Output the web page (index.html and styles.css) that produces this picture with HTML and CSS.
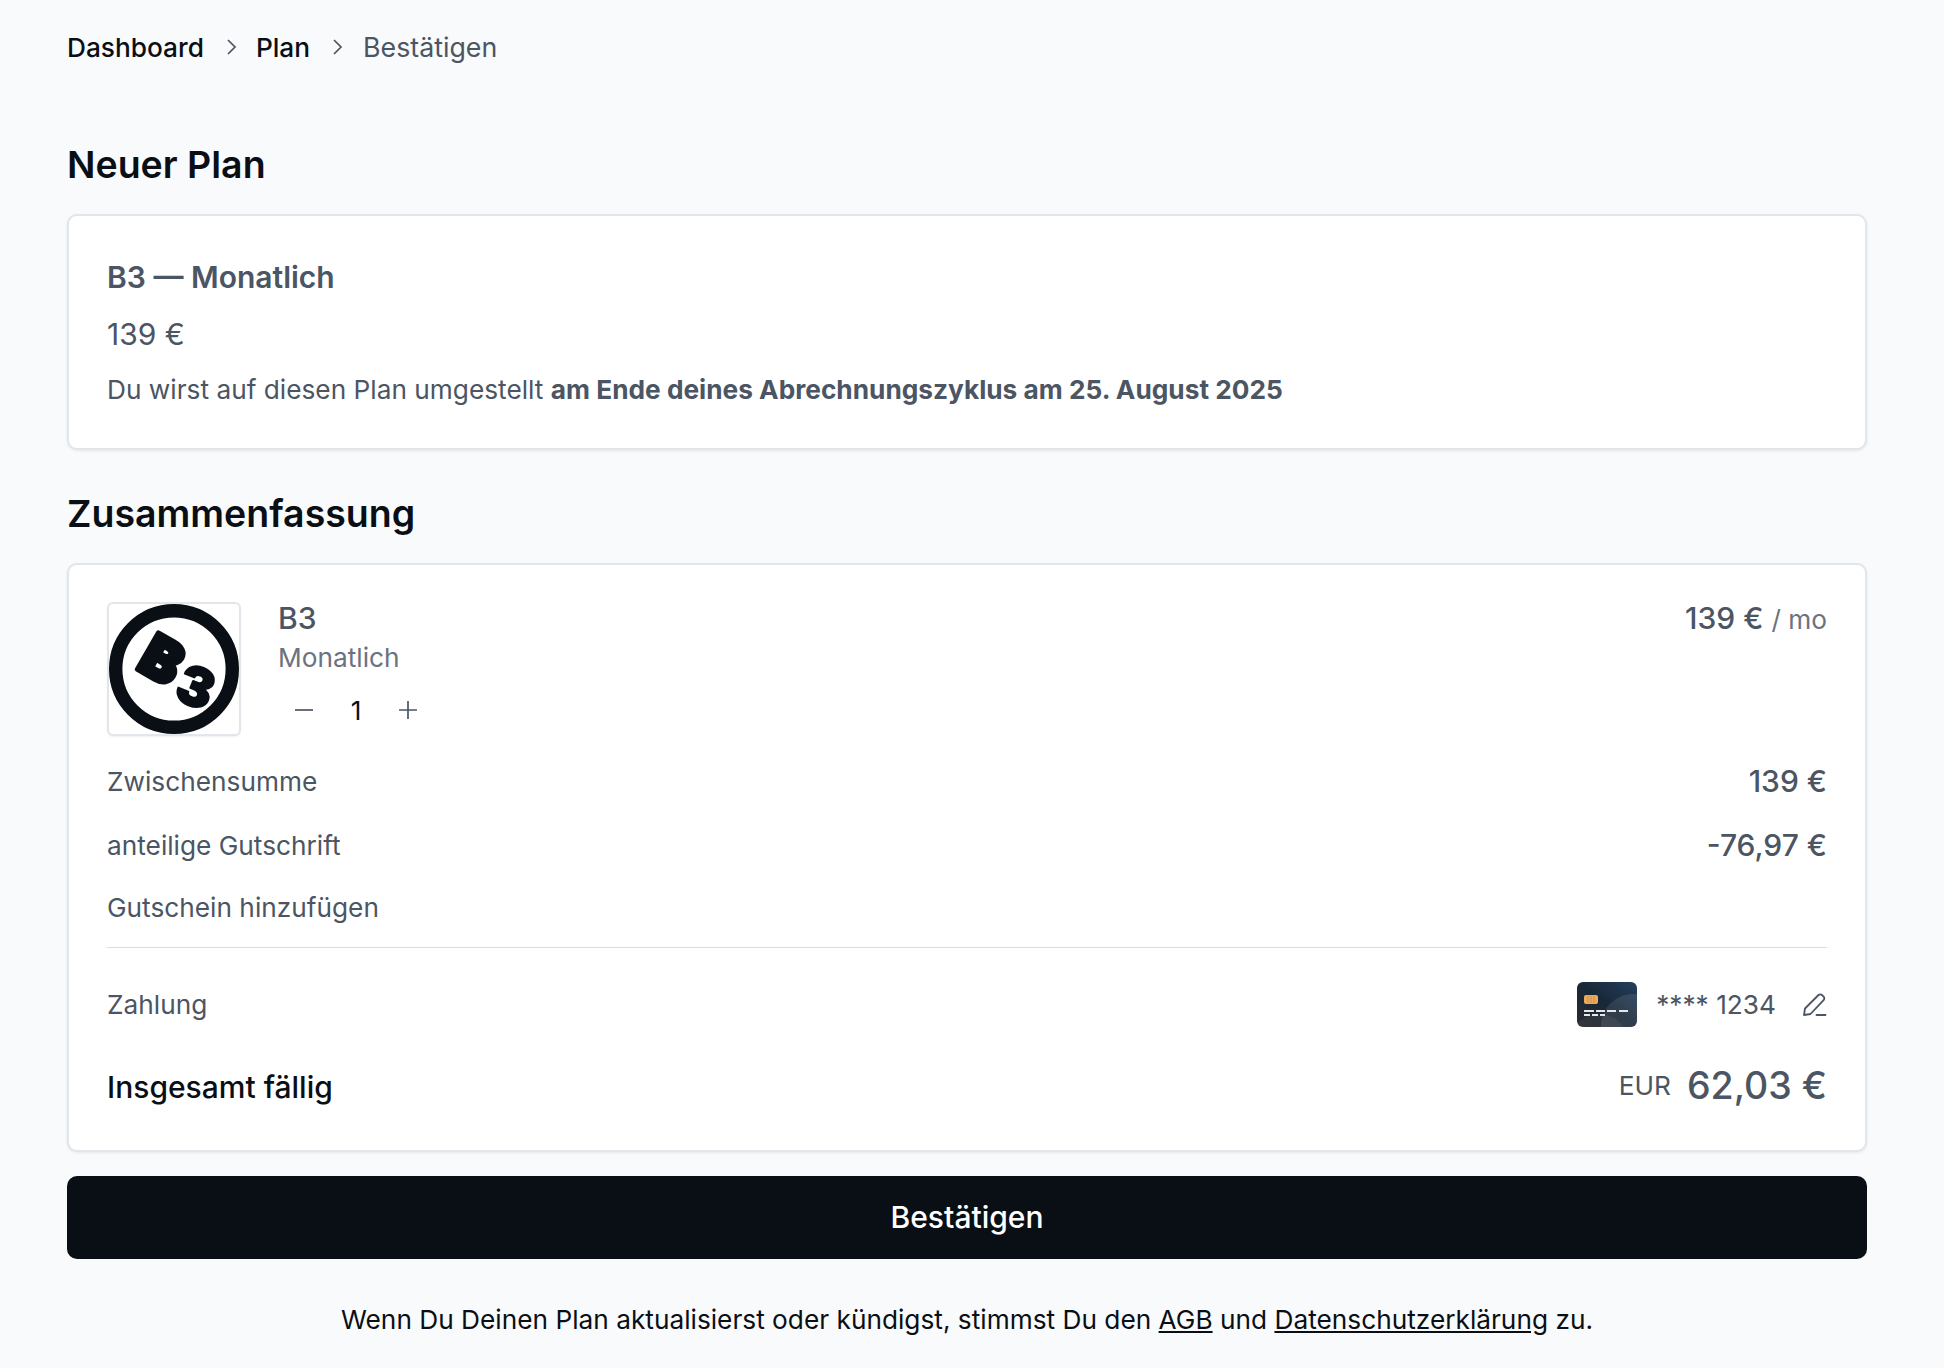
FILE: index.html
```html
<!DOCTYPE html>
<html lang="de">
<head>
    <meta charset="UTF-8">
    <title>Bestätigen</title>
    <link rel="stylesheet" href="styles.css">
</head>
<body>
    <nav class="breadcrumb">
        <a href="#">Dashboard</a>
        <svg class="chevron" viewBox="0 0 12 20"><path d="M2 3l7 7-7 7"/></svg>
        <a href="#">Plan</a>
        <svg class="chevron" viewBox="0 0 12 20"><path d="M2 3l7 7-7 7"/></svg>
        <span class="current">Bestätigen</span>
    </nav>

    <h2 class="section-title first">Neuer Plan</h2>
    <section class="card plan-card">
        <div class="plan-name">B3 — Monatlich</div>
        <div class="plan-price">139 €</div>
        <p class="plan-note">Du wirst auf diesen Plan umgestellt <strong>am Ende deines Abrechnungszyklus am 25. August 2025</strong></p>
    </section>

    <h2 class="section-title">Zusammenfassung</h2>
    <section class="card summary-card">
        <div class="product">
            <div class="logo-box">
                <svg viewBox="0 0 130 130" class="logo">
                    <circle cx="65" cy="65" r="58.3" class="logo-ring"/>
                    <text x="0" y="0" transform="translate(26 64) rotate(30)" class="logo-b">B</text>
                    <text x="0" y="0" transform="translate(63 94) rotate(22)" class="logo-3">3</text>
                </svg>
            </div>
            <div class="product-info">
                <div class="product-name">B3</div>
                <div class="product-term">Monatlich</div>
                <div class="stepper">
                    <svg class="step-icon" viewBox="0 0 20 20"><path d="M1 10h18"/></svg>
                    <span class="qty">1</span>
                    <svg class="step-icon" viewBox="0 0 20 20"><path d="M1 10h18M10 1v18"/></svg>
                </div>
            </div>
            <div class="product-price">139 € <span class="per">/ mo</span></div>
        </div>

        <div class="row row-sub">
            <span>Zwischensumme</span>
            <span class="amount">139 €</span>
        </div>
        <div class="row row-credit">
            <span>anteilige Gutschrift</span>
            <span class="amount">-76,97 €</span>
        </div>
        <div class="row row-coupon">
            <span>Gutschein hinzufügen</span>
        </div>

        <hr class="divider">

        <div class="row row-payment">
            <span>Zahlung</span>
            <div class="payment-method">
                <svg class="credit-card" viewBox="0 0 60 45">
                    <defs>
                        <linearGradient id="cardbg" x1="1" y1="0" x2="0" y2="1">
                            <stop offset="0" stop-color="#24405f"/>
                            <stop offset="0.5" stop-color="#182737"/>
                            <stop offset="1" stop-color="#2b2c2f"/>
                        </linearGradient>
                        <clipPath id="cardclip"><rect width="60" height="45" rx="6"/></clipPath>
                    </defs>
                    <g clip-path="url(#cardclip)">
                        <rect width="60" height="45" fill="url(#cardbg)"/>
                        <circle cx="56" cy="44" r="32" fill="#ffffff" opacity="0.1"/>
                        <circle cx="22" cy="62" r="30" fill="#ffffff" opacity="0.05"/>
                    </g>
                    <rect x="7" y="13" width="14" height="9" rx="2" fill="#eba95c"/>
                    <path d="M11 14v7M14 14v7M17 14v7" stroke="#c98a3f" stroke-width="0.8"/>
                    <path d="M7 29h10M19 29h9M30 29h9M42 29h9M7 33h6M15 33h6M23 33h5" stroke="#e4e6e8" stroke-width="1.8"/>
                </svg>
                <span class="card-number">**** 1234</span>
                <svg class="edit-icon" viewBox="0 0 24 24"><path d="M1 23l1-6.500L15.500 3a2.400 2.400 0 0 1 3.400 0l1.700 1.700a2.400 2.400 0 0 1 0 3.400L7.500 22zM13.500 23h9"/></svg>
            </div>
        </div>

        <div class="row row-total">
            <span class="total-label">Insgesamt fällig</span>
            <div class="total-value"><span class="currency">EUR</span><span class="total-amount">62,03 €</span></div>
        </div>
    </section>

    <button class="confirm">Bestätigen</button>

    <p class="legal">Wenn Du Deinen Plan aktualisierst oder kündigst, stimmst Du den <a href="#">AGB</a> und <a href="#">Datenschutzerklärung</a> zu.</p>
</body>
</html>
```

FILE: styles.css
```css
* {
    box-sizing: border-box;
}
body {
    margin: 0;
    padding: 29px 77px 0 67px;
    background-color: #f9fafb;
    font-family: Inter, "Liberation Sans", sans-serif;
    font-size: 26.25px;
    color: #4b5563;
}
.breadcrumb {
    display: flex;
    align-items: center;
    height: 36px;
    font-weight: 500;
}
.breadcrumb a {
    color: #0a0f16;
    text-decoration: none;
}
.breadcrumb .current {
    margin-left: 1px;
    color: #4b5563;
    font-size: 26.75px;
    font-weight: 400;
}
.chevron {
    width: 12px;
    height: 20px;
    margin: 0 18px 0 22px;
    fill: none;
    stroke: #4b5563;
    stroke-width: 1.7;
}
.section-title {
    margin: 0;
    font-size: 37.5px;
    line-height: 44px;
    font-weight: 600;
    color: #0a0f16;
}
.section-title.first {
    margin-top: 78px;
}
.card {
    margin-top: 27px;
    background: #fff;
    border: 2px solid #e2e5e9;
    border-radius: 10px;
    box-shadow: 0 1px 3px rgba(0, 0, 0, 0.08);
    padding: 38px;
}
.plan-card {
    height: 236px;
    margin-bottom: 42px;
}
.plan-name {
    font-size: 30px;
    line-height: 46px;
    font-weight: 600;
}
.plan-price {
    margin-top: 11px;
    font-size: 30px;
    line-height: 46px;
}
.plan-note {
    margin: 13px 0 0;
    line-height: 39px;
}
.plan-note strong {
    font-weight: 700;
}
.summary-card {
    padding-top: 36px;
    padding-bottom: 40px;
}
.product {
    display: flex;
    align-items: flex-start;
}
.logo-box {
    width: 134px;
    height: 134px;
    margin-top: 1px;
    border: 2px solid #e2e5e9;
    border-radius: 6px;
    background: #fff;
    box-shadow: 0 1px 2px rgba(0, 0, 0, 0.06);
    flex-shrink: 0;
}
.logo {
    display: block;
    width: 130px;
    height: 130px;
}
.logo-ring {
    fill: none;
    stroke: #0a0f16;
    stroke-width: 13.4;
}
.logo-b,
.logo-3 {
    font-family: Inter, sans-serif;
    font-weight: 900;
    fill: #0a0f16;
    stroke: #0a0f16;
    stroke-linejoin: round;
}
.logo-b {
    font-size: 58px;
    stroke-width: 5;
}
.logo-3 {
    font-size: 54px;
    stroke-width: 2;
}
.product-info {
    margin-left: 37px;
}
.product-name {
    font-size: 30px;
    line-height: 34px;
    font-weight: 500;
}
.product-term {
    margin-top: 6px;
    line-height: 34px;
    color: #6b7280;
}
.stepper {
    display: flex;
    align-items: center;
    margin-top: 18px;
    margin-left: 16px;
    height: 34px;
}
.step-icon {
    width: 20px;
    height: 20px;
    fill: none;
    stroke: #4b5563;
    stroke-width: 1.7;
}
.qty {
    width: 32px;
    margin: 0 26px;
    text-align: center;
    color: #0a0f16;
}
.product-price {
    margin-left: auto;
    font-size: 30px;
    line-height: 34px;
    font-weight: 500;
}
.per {
    font-size: 26.25px;
    font-weight: 400;
    color: #6b7280;
}
.row {
    display: flex;
    align-items: center;
    justify-content: space-between;
}
.amount {
    font-size: 30px;
    font-weight: 500;
}
.row-sub {
    margin-top: 22px;
    height: 46px;
}
.row-credit {
    margin-top: 18px;
    height: 46px;
}
.row-coupon {
    margin-top: 16px;
    height: 46px;
}
.divider {
    margin: 17px 0 0;
    border: none;
    border-top: 1px solid #d9dce1;
}
.row-payment {
    margin-top: 33px;
    height: 46px;
}
.payment-method {
    display: flex;
    align-items: center;
}
.credit-card {
    width: 60px;
    height: 45px;
}
.card-number {
    margin-left: 19px;
}
.edit-icon {
    width: 24px;
    height: 24px;
    margin-left: 27px;
    fill: none;
    stroke: #4b5563;
    stroke-width: 1.8;
    stroke-linecap: round;
    stroke-linejoin: round;
}
.row-total {
    margin-top: 37px;
    height: 46px;
}
.total-label {
    font-size: 30px;
    font-weight: 500;
    color: #0a0f16;
}
.total-value {
    display: flex;
    align-items: center;
    margin-bottom: 4px;
}
.total-amount {
    margin-left: 16px;
    font-size: 37.5px;
    font-weight: 500;
}
.confirm {
    display: block;
    width: 100%;
    height: 83px;
    margin-top: 24px;
    padding-bottom: 3px;
    background-color: #0a0f16;
    color: #fff;
    border: none;
    border-radius: 10px;
    font-family: inherit;
    font-size: 30px;
    font-weight: 500;
    cursor: pointer;
}
.legal {
    margin: 43px 0 0;
    text-align: center;
    line-height: 36px;
    color: #0a0f16;
}
.legal a {
    color: inherit;
}
```
